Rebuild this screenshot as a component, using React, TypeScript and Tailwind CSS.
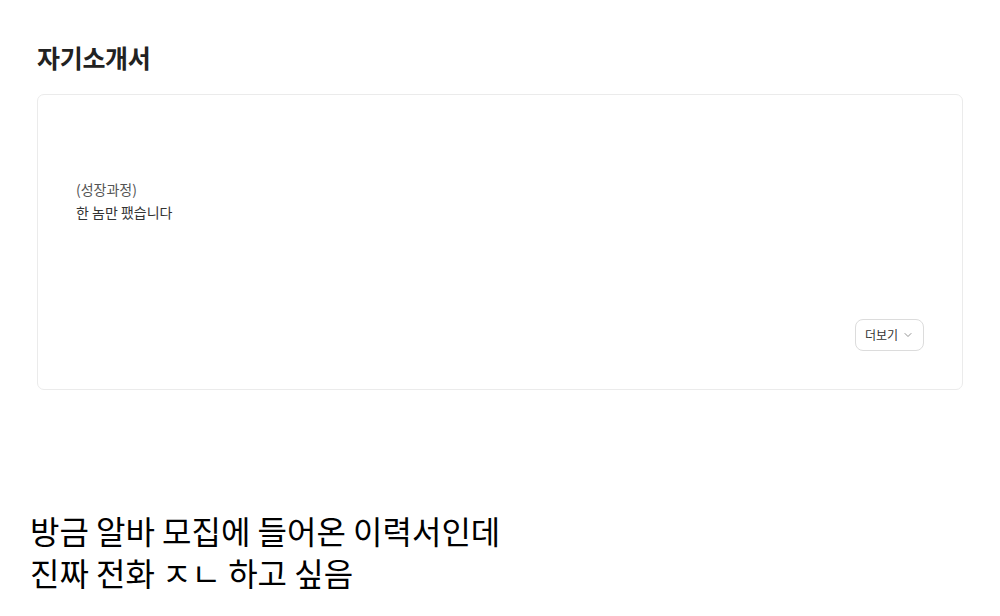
import { ChevronDown } from 'lucide-react';

export default function App() {
  return (
    <div className="h-[616px] w-[1000px] overflow-hidden bg-white" style={{ fontFamily: '"Noto Sans CJK KR", "Noto Sans", sans-serif' }}>
      {/* resume section */}
      <div className="pl-[37px] pr-[37px] pt-[37px]">
        <h2 className="text-[25px] font-bold leading-[40px] tracking-[-0.3px] text-[#222]">자기소개서</h2>
        <div className="mt-[17px] flex h-[296px] flex-col rounded-[7px] border border-[#ebebeb] px-[38px] pb-[38px] pt-[83px]">
          <p className="text-[14px] leading-[23px] text-[#555]">(성장과정)</p>
          <p className="text-[14px] leading-[23px] text-[#333]">한 놈만 팼습니다</p>
          <div className="mt-auto flex justify-end">
            <button className="flex h-[32px] w-[69px] items-center justify-center gap-[4px] rounded-[8px] border border-[#dcdcdc] text-[12px] text-[#333]">
              더보기
              <ChevronDown className="h-[12px] w-[12px] text-[#777]" strokeWidth={1.6} />
            </button>
          </div>
        </div>
      </div>

      {/* caption */}
      <div className="mt-[119px] pl-[30px] text-[32px] leading-[42px] text-black">
        <p>방금 알바 모집에 들어온 이력서인데</p>
        <p>진짜 전화 ㅈㄴ 하고 싶음</p>
      </div>
    </div>
  );
}
